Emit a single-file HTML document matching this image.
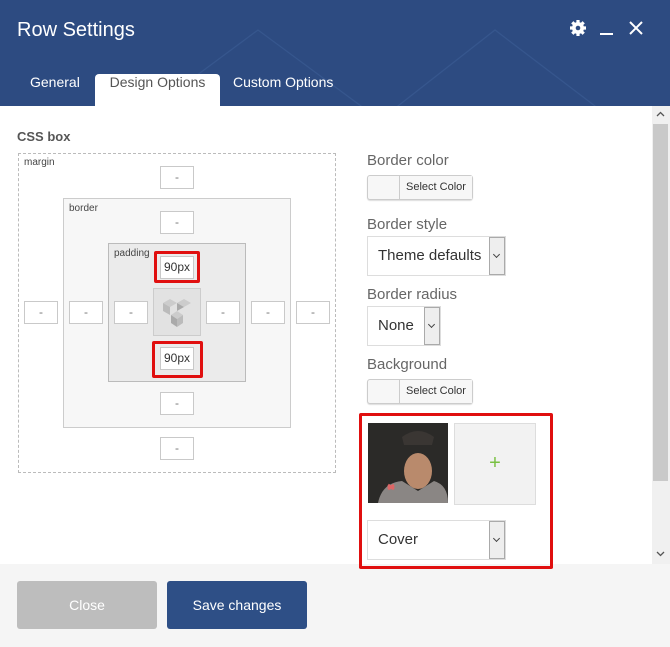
<!DOCTYPE html>
<html><head><meta charset="utf-8"><style>
*{box-sizing:border-box;margin:0;padding:0}
body{width:670px;height:647px;position:relative;overflow:hidden;background:#fff;font-family:"Liberation Sans",sans-serif;color:#555}
.a{position:absolute}
.hdr{left:0;top:0;width:670px;height:106px;background:#2d4b81;overflow:hidden}
.inp{position:absolute;width:34px;height:23px;background:#fff;border:1px solid #c9c9c9;font-size:12px;color:#777;text-align:center;line-height:21px}
.red{position:absolute;border:3px solid #e00f0f;border-radius:2px}
.lbl{position:absolute;font-size:15px;color:#666}
.sc{position:absolute;width:106px;height:25px;border:1px solid #ccc;border-radius:3px;background:#f7f7f7;box-shadow:0 1px 1px #ddd}
.sc span{position:absolute;left:31px;top:0;height:23px;border-left:1px solid #ccc;width:73px;text-align:center;font-size:11px;line-height:23px;color:#333;background:#f7f7f7}
.sel{position:absolute;height:40px;border:1px solid #ddd;background:#fff;font-size:15px;color:#333;line-height:38px;padding-left:10px}
.sel i{position:absolute;right:0;top:0;width:16px;height:38px;background:#eee;border:1px solid #aaa}
.sel i:after{content:"";position:absolute;left:4px;top:14px;width:4px;height:4px;border-right:1.5px solid #444;border-bottom:1.5px solid #444;transform:rotate(45deg)}
</style></head><body>
<div class="a hdr">
<svg class="a" style="left:0;top:0" width="670" height="106"><g stroke="#36568d" stroke-width="1.3" fill="none"><path d="M150 110 L258 30 L380 120"/><path d="M380 120 L495 30 L620 125"/></g></svg>
<div class="a" style="left:17px;top:19px;font-size:20px;color:#fff">Row Settings</div>
<svg class="a" style="left:568px;top:18px" width="20" height="20" viewBox="0 0 20 20"><circle cx="10" cy="10" r="6" fill="#fff"/><g stroke="#fff" stroke-width="3.2"><path d="M10 2v16M2 10h16M4.3 4.3l11.4 11.4M15.7 4.3L4.3 15.7"/></g><circle cx="10" cy="10" r="2.3" fill="#2d4b81"/></svg>
<div class="a" style="left:600px;top:33px;width:13px;height:2px;background:#fff"></div>
<svg class="a" style="left:629px;top:21px" width="14" height="14"><path d="M1 1L13 13M13 1L1 13" stroke="#fff" stroke-width="2"/></svg>
<div class="a" style="left:30px;top:74px;font-size:14px;color:#fff">General</div>
<div class="a" style="left:95px;top:74px;width:125px;height:34px;background:#fff;border-radius:4px 4px 0 0"></div>
<div class="a" style="left:95px;top:74px;width:125px;text-align:center;font-size:14px;color:#555">Design Options</div>
<div class="a" style="left:233px;top:74px;font-size:14px;color:#fff">Custom Options</div>
</div>

<div class="a" style="left:17px;top:129px;font-size:13px;font-weight:bold;color:#555">CSS box</div>
<div class="a" style="left:18px;top:153px;width:318px;height:320px;border:1px dashed #bbb"></div>
<div class="a" style="left:24px;top:157px;font-size:10px;color:#444">margin</div>
<div class="a" style="left:63px;top:198px;width:228px;height:230px;border:1px solid #ccc;background:#f7f7f7"></div>
<div class="a" style="left:69px;top:203px;font-size:10px;color:#444">border</div>
<div class="a" style="left:108px;top:243px;width:138px;height:139px;border:1px solid #bbb;background:#ebebeb"></div>
<div class="a" style="left:114px;top:248px;font-size:10px;color:#444">padding</div>
<div class="a" style="left:153px;top:288px;width:48px;height:48px;border:1px solid #ccc;background:#e2e2e2"></div>
<svg class="a" style="left:161px;top:295px" width="32" height="36" viewBox="0 0 32 36"><g fill="#bbb"><path d="M2 8l7-4 7 4-7 4z" fill="#ccc"/><path d="M2 8l7 4v8l-7-4z"/><path d="M16 8l7-4 7 4-7 4z" fill="#ccc"/><path d="M16 8v8l7-4z" fill="#aaa"/><path d="M10 20l6-4 6 4-6 4z" fill="#ccc"/><path d="M10 20l6 4v8l-6-4z" fill="#aaa"/><path d="M16 24l6-4v8l-6 4z"/></g></svg>
<div class="inp" style="left:160px;top:166px">-</div>
<div class="inp" style="left:160px;top:211px">-</div>
<div class="inp" style="left:160px;top:392px">-</div>
<div class="inp" style="left:160px;top:437px">-</div>
<div class="inp" style="left:24px;top:301px">-</div>
<div class="inp" style="left:69px;top:301px">-</div>
<div class="inp" style="left:114px;top:301px">-</div>
<div class="inp" style="left:206px;top:301px">-</div>
<div class="inp" style="left:251px;top:301px">-</div>
<div class="inp" style="left:296px;top:301px">-</div>
<div class="red" style="left:154px;top:251px;width:46px;height:32px"></div>
<div class="inp" style="left:160px;top:256px;font-size:12px;color:#333">90px</div>
<div class="red" style="left:152px;top:341px;width:51px;height:37px"></div>
<div class="inp" style="left:160px;top:347px;font-size:12px;color:#333">90px</div>

<div class="lbl" style="left:367px;top:152px">Border color</div>
<div class="sc" style="left:367px;top:175px"><span>Select Color</span></div>
<div class="lbl" style="left:367px;top:216px">Border style</div>
<div class="sel" style="left:367px;top:236px;width:139px">Theme defaults<i></i></div>
<div class="lbl" style="left:367px;top:286px">Border radius</div>
<div class="sel" style="left:367px;top:306px;width:74px">None<i></i></div>
<div class="lbl" style="left:367px;top:356px">Background</div>
<div class="sc" style="left:367px;top:379px"><span>Select Color</span></div>
<div class="red" style="left:359px;top:413px;width:194px;height:156px"></div>
<svg class="a" style="left:368px;top:423px" width="80" height="80"><rect width="80" height="80" fill="#2b2a28"/><ellipse cx="50" cy="48" rx="14" ry="18" fill="#b98a6c"/><path d="M34 14 Q50 2 66 14 L64 22 L36 22z" fill="#3a3633"/><path d="M10 80 Q14 60 34 58 L50 68 L66 58 Q80 62 80 80z" fill="#8a8684"/><path d="M20 62l6 4M26 62l-6 4" stroke="#d66" stroke-width="3"/></svg>
<div class="a" style="left:454px;top:423px;width:82px;height:82px;background:#f2f2f2;border:1px solid #ddd;color:#7ac143;font-size:20px;text-align:center;line-height:78px">+</div>
<div class="sel" style="left:367px;top:520px;width:139px">Cover<i></i></div>

<div class="a" style="left:652px;top:106px;width:18px;height:459px;background:#f0f0f0"></div>
<div class="a" style="left:653px;top:124px;width:15px;height:357px;background:#c9c9c9"></div>
<svg class="a" style="left:656px;top:111px" width="9" height="6"><path d="M1 5L4.5 1.5L8 5" stroke="#555" fill="none" stroke-width="1.3"/></svg>
<svg class="a" style="left:656px;top:551px" width="9" height="6"><path d="M1 1L4.5 4.5L8 1" stroke="#555" fill="none" stroke-width="1.3"/></svg>

<div class="a" style="left:0;top:564px;width:670px;height:83px;background:#f5f5f5"></div>
<div class="red" style="left:359px;top:555px;width:194px;height:14px;border-top:none"></div>
<div class="a" style="left:17px;top:581px;width:140px;height:48px;background:#bdbdbd;border-radius:3px;color:#fff;font-size:14px;text-align:center;line-height:48px">Close</div>
<div class="a" style="left:167px;top:581px;width:140px;height:48px;background:#2e4f86;border-radius:3px;color:#fff;font-size:14px;text-align:center;line-height:48px">Save changes</div>
</body></html>
